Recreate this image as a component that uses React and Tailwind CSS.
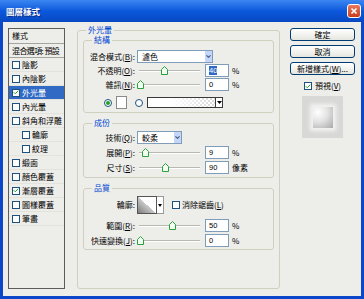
import { Check as CheckIcon, ChevronDown } from 'lucide-react'

const listItems = [
  { name: '陰影' },
  { name: '內陰影' },
  { name: '外光暈', checked: true, active: true },
  { name: '內光暈' },
  { name: '斜角和浮雕' },
  { name: '輪廓', sub: true },
  { name: '紋理', sub: true },
  { name: '緞面' },
  { name: '顏色覆蓋' },
  { name: '漸層覆蓋', checked: true },
  { name: '圖樣覆蓋' },
  { name: '筆畫' },
]

function Box({ checked }) {
  return (
    <span className="w-[8px] h-[8px] shrink-0 bg-white border border-[#1c5180] flex items-center justify-center">
      {checked && <CheckIcon size={7} strokeWidth={4} className="text-[#21a121]" />}
    </span>
  )
}

function Radio({ checked }) {
  return (
    <span className="w-[8px] h-[8px] shrink-0 rounded-full bg-white border border-[#1c5180] flex items-center justify-center">
      {checked && <span className="w-[4px] h-[4px] rounded-full bg-[#21a121]" />}
    </span>
  )
}

function Label({ text, k }) {
  return (
    <span className="w-[51px] shrink-0 text-right whitespace-nowrap">
      {text}
      {k && (
        <>
          (<span className="underline">{k}</span>)
        </>
      )}
      :
    </span>
  )
}

function Thumb() {
  return (
    <svg width="7" height="9" viewBox="0 0 7 9">
      <path d="M0.5 3.5 L3.5 0.5 L6.5 3.5 V8.5 H0.5 Z" fill="#f4fff4" stroke="#2aa13a" strokeLinejoin="round" />
    </svg>
  )
}

function Slider({ at }) {
  return (
    <div className="relative w-[68px] h-[13px] ml-[2px] shrink-0 flex items-center">
      <div className="ml-[2px] w-[61px] h-[2px] bg-[#b9b9b2] border-b border-white" />
      <div className="absolute top-[2px]" style={{ left: at }}>
        <Thumb />
      </div>
    </div>
  )
}

function Num({ value, selected }) {
  return (
    <div className="w-[24px] h-[13px] shrink-0 bg-white border border-[#7f9db9] flex items-center pl-[3px] font-['Liberation_Sans',sans-serif] text-[7.5px]">
      {selected ? <span className="bg-[#316ac5] text-white leading-[9px]">{value}</span> : value}
    </div>
  )
}

function SliderRow({ text, k, at, value, unit = '%', selected, className }) {
  return (
    <div className={`flex items-center h-[13px] ${className}`}>
      <Label text={text} k={k} />
      <Slider at={at} />
      <Num value={value} selected={selected} />
      <span className="ml-[3px]">{unit}</span>
    </div>
  )
}

function Select({ value, w }) {
  return (
    <div className={`${w} h-[13px] ml-[2px] shrink-0 bg-white border border-[#7f9db9] flex items-center`}>
      <span className="flex-1 pl-[4px]">{value}</span>
      <span className="w-[8px] h-full bg-[#c6d6fa] border-l border-white flex items-center justify-center">
        <ChevronDown size={7} strokeWidth={4} className="text-[#4d6185]" />
      </span>
    </div>
  )
}

function Group({ title, className, children }) {
  return (
    <fieldset className={`border border-[#d0d0bf] rounded-[3px] ${className}`}>
      <legend className="ml-[8px] px-[2px] leading-[4px] text-[#0046d5]">{title}</legend>
      <div className="flex flex-col">{children}</div>
    </fieldset>
  )
}

function Button({ children }) {
  return (
    <button className="w-[65px] h-[13px] rounded-[3px] border border-[#003c74] bg-gradient-to-b from-white to-[#e6e6e0] text-black leading-none flex items-center justify-center">
      {children}
    </button>
  )
}

export default function App() {
  return (
    <div className="w-[364px] h-[299px] bg-[#0a47c9] flex flex-col font-['Noto_Sans_CJK_TC','Noto_Sans',sans-serif] text-[8px] text-black">
      <div className="h-[22px] shrink-0 bg-gradient-to-b from-[#3b86f0] via-[#0b58dc] to-[#0848c2] flex items-center pl-[6px] pr-[3px]">
        <span className="text-white font-bold text-[8.5px] [text-shadow:1px_1px_0_#0a2a80]">圖層樣式</span>
        <span className="ml-auto w-[14px] h-[14px] rounded-[3px] border border-white bg-gradient-to-b from-[#e8795b] to-[#c83b1c] flex items-center justify-center">
          <svg width="8" height="8" viewBox="0 0 8 8">
            <path d="M1.5 1.5 L6.5 6.5 M6.5 1.5 L1.5 6.5" stroke="#fff" strokeWidth="1.6" />
          </svg>
        </span>
      </div>

      <div className="flex-1 mx-[3px] mb-[3px] bg-[#ededea] flex pt-[6px] pl-[5px]">
        {/* style list */}
        <div className="w-[57px] h-[261px] shrink-0 border border-[#5c5c5c] flex flex-col">
          <div className="h-[15px] flex items-center pl-[3px] border-b border-[#a5a5a0]">樣式</div>
          <div className="h-[14px] flex items-center pl-[3px] border-b border-[#a5a5a0] whitespace-nowrap tracking-[-0.6px]">混合選項: 預設</div>
          {listItems.map(item => (
            <div
              key={item.name}
              className={`h-[14px] flex items-center gap-[2px] border-b border-[#e3e3de] whitespace-nowrap ${
                item.sub ? 'pl-[13px]' : 'pl-[3px]'
              } ${item.active ? 'bg-[#316ac5] text-white' : ''}`}
            >
              <Box checked={item.checked} />
              <span>{item.name}</span>
            </div>
          ))}
        </div>

        {/* settings */}
        <fieldset className="ml-[12px] w-[203px] h-[261px] shrink-0 border border-[#d0d0bf] rounded-[3px] px-[5px]">
          <legend className="ml-[3px] px-[2px] leading-[4px] text-[#0046d5]">外光暈</legend>

          <Group title="結構" className="mt-[6px] h-[75px]">
            <div className="flex items-center h-[13px] mt-[8px]">
              <Label text="混合模式" k="B" />
              <Select value="濾色" w="w-[76px]" />
            </div>
            <SliderRow text="不透明" k="O" at={24} value="40" selected className="mt-[1px]" />
            <SliderRow text="雜訊" k="N" at={0} value="0" className="mt-[1px]" />
            <div className="flex items-center h-[13px] mt-[5px] pl-[20px]">
              <Radio checked />
              <span className="ml-[4px] w-[11px] h-[13px] bg-white border border-[#8a8a8a]" />
              <span className="ml-[8px]">
                <Radio />
              </span>
              <div className="ml-[4px] w-[76px] h-[11px] border border-[#3a3a3a] flex">
                <div className="flex-1 bg-[linear-gradient(90deg,#fff_35%,rgba(255,255,255,0)),repeating-conic-gradient(#d8d8d8_0_25%,#fff_0_50%)] bg-[length:100%_100%,4px_4px]" />
                <div className="w-[7px] bg-white border-l border-[#3a3a3a] flex items-center justify-center">
                  <svg width="5" height="3" viewBox="0 0 5 3">
                    <path d="M0 0 H5 L2.5 3 Z" fill="#000" />
                  </svg>
                </div>
              </div>
            </div>
          </Group>

          <Group title="成份" className="mt-[8px] h-[57px]">
            <div className="flex items-center h-[13px] mt-[6px]">
              <Label text="技術" k="Q" />
              <Select value="較柔" w="w-[45px]" />
            </div>
            <SliderRow text="展開" k="P" at={5} value="9" className="mt-[2px]" />
            <SliderRow text="尺寸" k="S" at={25} value="90" unit="像素" className="mt-[2px]" />
          </Group>

          <Group title="品質" className="mt-[8px] h-[64px]">
            <div className="flex items-center h-[18px] mt-[6px]">
              <Label text="輪廓" />
              <div className="ml-[2px] w-[20px] h-[18px] border border-[#555] bg-[linear-gradient(to_top_right,#7d7d7d,#c9c9c9_50%,#fff_50%)]" />
              <div className="w-[7px] h-[18px] bg-white border border-l-0 border-[#999] flex items-center justify-center">
                <svg width="4" height="3" viewBox="0 0 4 3">
                  <path d="M0 0 H4 L2 3 Z" fill="#000" />
                </svg>
              </div>
              <span className="ml-[8px]">
                <Box />
              </span>
              <span className="ml-[2px] whitespace-nowrap">
                消除鋸齒(<span className="underline">L</span>)
              </span>
            </div>
            <SliderRow text="範圍" k="R" at={32} value="50" className="mt-[5px]" />
            <SliderRow text="快速變換" k="J" at={0} value="0" className="mt-[2px]" />
          </Group>
        </fieldset>

        {/* buttons */}
        <div className="ml-[10px] w-[65px] shrink-0 flex flex-col items-center">
          <Button>確定</Button>
          <div className="mt-[4px]">
            <Button>取消</Button>
          </div>
          <div className="mt-[4px]">
            <Button>
              新增樣式(<span className="underline">W</span>)...
            </Button>
          </div>
          <div className="mt-[5px] flex items-center gap-[3px]">
            <Box checked />
            <span>
              預視(<span className="underline">V</span>)
            </span>
          </div>
          <div className="mt-[4px] w-[41px] h-[42px] bg-[#d8d8d6] flex items-center justify-center">
            <div className="w-[20px] h-[21px] bg-[radial-gradient(circle_at_25%_25%,#ffffff,#e2e2e2_45%,#a9a9a9)] shadow-[0_0_4px_3px_rgba(255,255,255,0.7)]" />
          </div>
        </div>
      </div>
    </div>
  )
}
